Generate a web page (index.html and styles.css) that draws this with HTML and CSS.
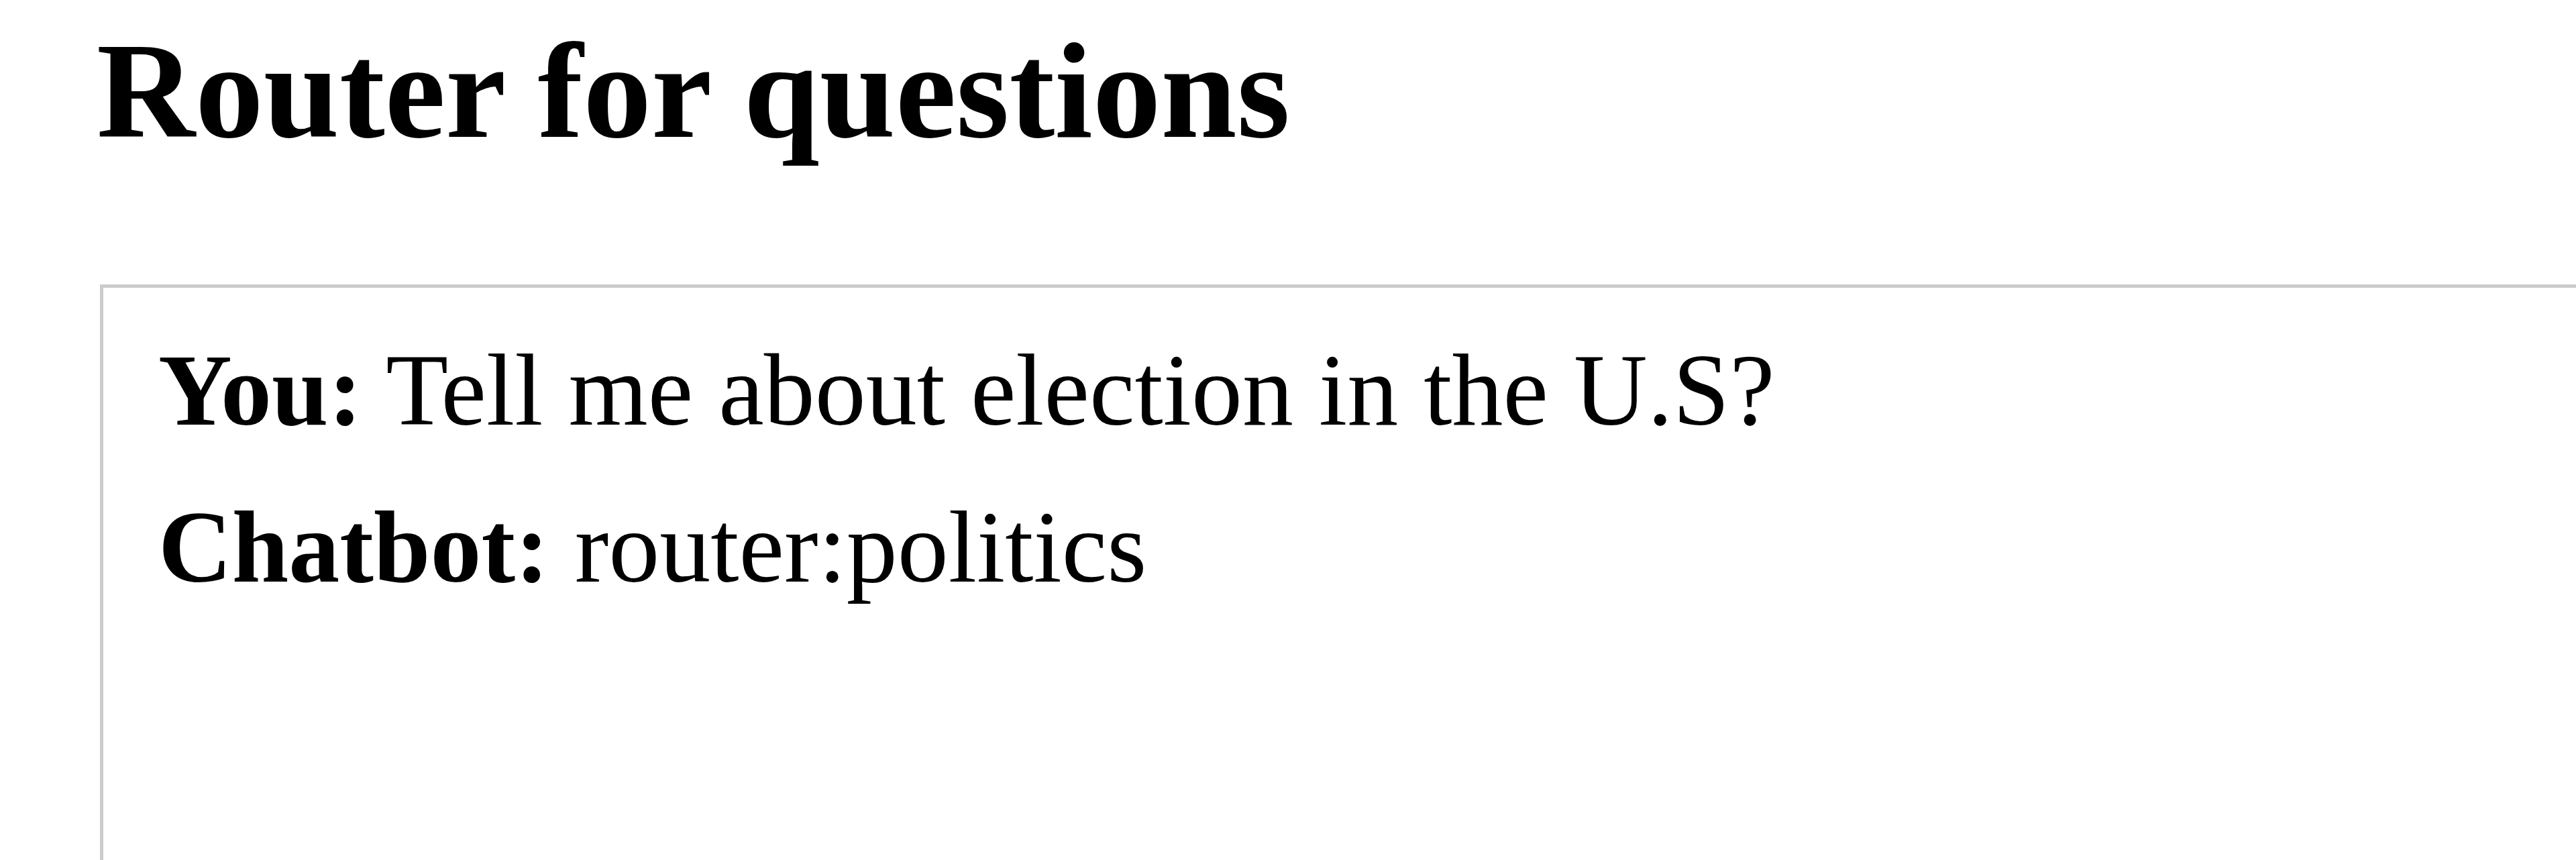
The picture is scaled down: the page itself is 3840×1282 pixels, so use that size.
FILE: index.html
```html
<!DOCTYPE html>
<html lang="en">
<head>
<meta charset="utf-8">
<title>Router for questions</title>
<link rel="stylesheet" href="styles.css">
</head>
<body>
<main class="page">
  <h1 class="title">Router for questions</h1>
  <section class="chat">
    <p class="msg"><b class="who">You:</b> Tell me about election in the U.S?</p>
    <p class="msg"><b class="who">Chatbot:</b> router:politics</p>
  </section>
</main>
</body>
</html>
```

FILE: styles.css
```css
html, body {
  margin: 0;
  padding: 0;
  background: #ffffff;
}

body {
  font-family: "Liberation Serif", "Times New Roman", serif;
  color: #000000;
  overflow: hidden;
  height: 1282px;
}

.page {
  padding: 19px 0 0 144px;
}

.title {
  margin: 0;
  font-size: 203.5px;
  line-height: 234px;
  font-weight: bold;
  white-space: nowrap;
}

.chat {
  box-sizing: border-box;
  margin: 171px 0 0 5px;
  width: 3691px;
  height: 858px;
  border-top: 5px solid #cbcbcb;
  border-left: 5px solid #cbcbcb;
  padding: 66px 0 0 82px;
  display: flex;
  flex-direction: column;
  gap: 60px;
}

.msg {
  margin: 0;
  font-size: 152px;
  line-height: 174px;
  white-space: nowrap;
}

.who {
  font-weight: bold;
}
```
